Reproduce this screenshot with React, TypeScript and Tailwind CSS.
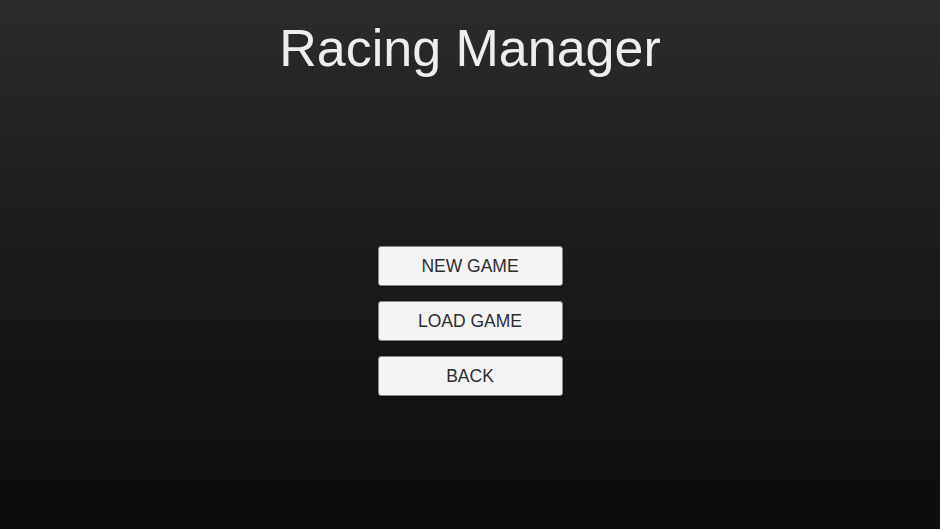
export default function App() {
  const buttons = ['NEW GAME', 'LOAD GAME', 'BACK'];

  return (
    <div
      className="flex h-[529px] w-full flex-col items-center bg-gradient-to-b from-[#2b2b2b] to-[#0c0c0c]"
      style={{ fontFamily: '"Liberation Sans", Arial, sans-serif' }}
    >
      <h1 className="mt-[22px] text-[52px] leading-none text-[#eeeeee]">Racing Manager</h1>
      <div className="mt-[172px] flex flex-col gap-[15px]">
        {buttons.map((label) => (
          <button
            key={label}
            className="flex h-[40px] w-[185px] items-center justify-center rounded-[3px] border border-[#8a8a8a] bg-[#f4f4f4] text-[17.5px] text-[#2e2e2e] shadow-[0_1px_2px_rgba(0,0,0,0.6)]"
          >
            {label}
          </button>
        ))}
      </div>
    </div>
  );
}
